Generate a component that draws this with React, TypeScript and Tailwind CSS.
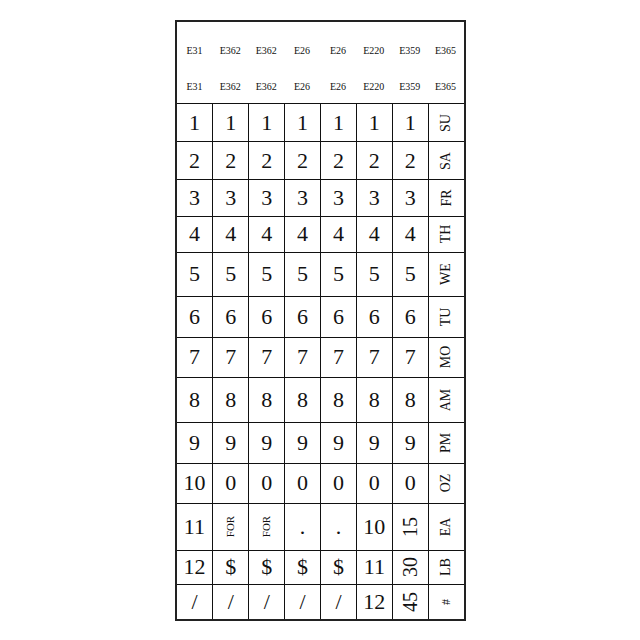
import React from 'react';

type Cell = string | { rot: string; size: string };

const FOR: Cell = { rot: 'FOR', size: 'text-[11px]' };

const rows: { h: string; cells: Cell[]; label: string }[] = [
    { h: 'h-[38px]', cells: ['1', '1', '1', '1', '1', '1', '1'], label: 'SU' },
    { h: 'h-[38px]', cells: ['2', '2', '2', '2', '2', '2', '2'], label: 'SA' },
    { h: 'h-[37px]', cells: ['3', '3', '3', '3', '3', '3', '3'], label: 'FR' },
    { h: 'h-[36px]', cells: ['4', '4', '4', '4', '4', '4', '4'], label: 'TH' },
    { h: 'h-[44px]', cells: ['5', '5', '5', '5', '5', '5', '5'], label: 'WE' },
    { h: 'h-[41px]', cells: ['6', '6', '6', '6', '6', '6', '6'], label: 'TU' },
    { h: 'h-[41px]', cells: ['7', '7', '7', '7', '7', '7', '7'], label: 'MO' },
    { h: 'h-[45px]', cells: ['8', '8', '8', '8', '8', '8', '8'], label: 'AM' },
    { h: 'h-[41px]', cells: ['9', '9', '9', '9', '9', '9', '9'], label: 'PM' },
    { h: 'h-[40px]', cells: ['10', '0', '0', '0', '0', '0', '0'], label: 'OZ' },
    { h: 'h-[47px]', cells: ['11', FOR, FOR, '.', '.', '10', { rot: '15', size: 'text-[20px]' }], label: 'EA' },
    { h: 'h-[34px]', cells: ['12', '$', '$', '$', '$', '11', { rot: '30', size: 'text-[20px]' }], label: 'LB' },
    { h: 'h-[35px]', cells: ['/', '/', '/', '/', '/', '12', { rot: '45', size: 'text-[20px]' }], label: '#' },
];

const codes = ['E31', 'E362', 'E362', 'E26', 'E26', 'E220', 'E359', 'E365'];

function Rotated({ text, size }: { text: string; size: string }) {
    return (
        <span className={`-rotate-90 whitespace-nowrap leading-none ${size}`}>{text}</span>
    );
}

export default function App() {
    return (
        <div
            className="w-[640px] h-[640px] bg-white flex items-center justify-center text-[#111]"
            style={{ fontFamily: '"Liberation Serif", "Times New Roman", serif' }}
        >
            <div className="w-[291px] h-[601px] border-2 border-[#222] flex flex-col">
                {/* header codes */}
                <div className="h-[82px] flex flex-col pt-[23px] gap-[24px] text-[10px] leading-[12px]">
                    {[0, 1].map((r) => (
                        <div key={r} className="grid grid-cols-8">
                            {codes.map((c, i) => (
                                <span key={i} className="text-center">{c}</span>
                            ))}
                        </div>
                    ))}
                </div>

                {rows.map((row, ri) => (
                    <div key={ri} className={`grid grid-cols-8 border-t border-[#111] ${row.h}`}>
                        {row.cells.map((cell, ci) => (
                            <div
                                key={ci}
                                className={`flex items-center justify-center text-[22px] leading-none ${ci > 0 ? 'border-l border-[#111]' : ''}`}
                            >
                                {typeof cell === 'string' ? cell : <Rotated text={cell.rot} size={cell.size} />}
                            </div>
                        ))}
                        <div className="flex items-center justify-center border-l border-[#111]">
                            <Rotated text={row.label} size={row.label === '#' ? 'text-[12px]' : 'text-[14px]'} />
                        </div>
                    </div>
                ))}
            </div>
        </div>
    );
}
